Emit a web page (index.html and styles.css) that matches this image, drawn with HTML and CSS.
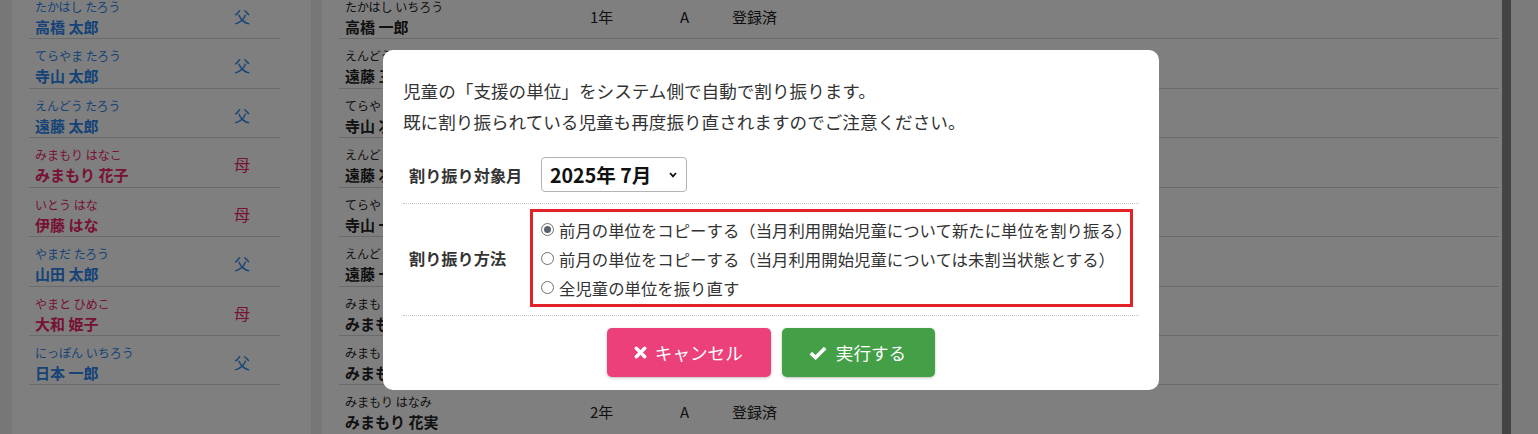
FILE: index.html
```html
<!DOCTYPE html>
<html lang="ja">
<head>
<meta charset="utf-8">
<title>支援の単位 割り振り</title>
<link rel="stylesheet" href="styles.css">
</head>
<body>
<div class="page">
  <aside class="panel-left">
    <ul class="list">
      <li class="row father"><div class="who"><span class="kana">たかはし たろう</span><span class="name">高橋 太郎</span></div><span class="rel">父</span></li>
      <li class="row father"><div class="who"><span class="kana">てらやま たろう</span><span class="name">寺山 太郎</span></div><span class="rel">父</span></li>
      <li class="row father"><div class="who"><span class="kana">えんどう たろう</span><span class="name">遠藤 太郎</span></div><span class="rel">父</span></li>
      <li class="row mother"><div class="who"><span class="kana">みまもり はなこ</span><span class="name">みまもり 花子</span></div><span class="rel">母</span></li>
      <li class="row mother"><div class="who"><span class="kana">いとう はな</span><span class="name">伊藤 はな</span></div><span class="rel">母</span></li>
      <li class="row father"><div class="who"><span class="kana">やまだ たろう</span><span class="name">山田 太郎</span></div><span class="rel">父</span></li>
      <li class="row mother"><div class="who"><span class="kana">やまと ひめこ</span><span class="name">大和 姫子</span></div><span class="rel">母</span></li>
      <li class="row father"><div class="who"><span class="kana">にっぽん いちろう</span><span class="name">日本 一郎</span></div><span class="rel">父</span></li>
    </ul>
  </aside>
  <main class="panel-right">
    <ul class="list">
      <li class="row child"><div class="who"><span class="kana">たかはし いちろう</span><span class="name">高橋 一郎</span></div><span class="grade">1年</span><span class="cls">A</span><span class="status">登録済</span></li>
      <li class="row child"><div class="who"><span class="kana">えんどう さぶろう</span><span class="name">遠藤 三郎</span></div><span class="grade">1年</span><span class="cls">A</span><span class="status">登録済</span></li>
      <li class="row child"><div class="who"><span class="kana">てらやま じろう</span><span class="name">寺山 次郎</span></div><span class="grade">1年</span><span class="cls">A</span><span class="status">登録済</span></li>
      <li class="row child"><div class="who"><span class="kana">えんどう じろう</span><span class="name">遠藤 次郎</span></div><span class="grade">1年</span><span class="cls">A</span><span class="status">登録済</span></li>
      <li class="row child"><div class="who"><span class="kana">てらやま いちろう</span><span class="name">寺山 一郎</span></div><span class="grade">1年</span><span class="cls">A</span><span class="status">登録済</span></li>
      <li class="row child"><div class="who"><span class="kana">えんどう いちろう</span><span class="name">遠藤 一郎</span></div><span class="grade">1年</span><span class="cls">A</span><span class="status">登録済</span></li>
      <li class="row child"><div class="who"><span class="kana">みまもり たろう</span><span class="name">みまもり 太郎</span></div><span class="grade">2年</span><span class="cls">A</span><span class="status">登録済</span></li>
      <li class="row child"><div class="who"><span class="kana">みまもり じろう</span><span class="name">みまもり 次郎</span></div><span class="grade">2年</span><span class="cls">A</span><span class="status">登録済</span></li>
      <li class="row child"><div class="who"><span class="kana">みまもり はなみ</span><span class="name">みまもり 花実</span></div><span class="grade">2年</span><span class="cls">A</span><span class="status">登録済</span></li>
    </ul>
  </main>
  <div class="rail"></div>
  <div class="edge"></div>
</div>

<div class="overlay">
  <div class="modal">
    <p class="desc">児童の「支援の単位」をシステム側で自動で割り振ります。<br>既に割り振られている児童も再度振り直されますのでご注意ください。</p>
    <div class="form">
      <div class="form-row">
        <div class="label">割り振り対象月</div>
        <div class="value">
          <div class="select-box">
            <select class="month">
              <option>2025年 7月</option>
            </select>
            <svg class="chev" width="8" height="6" viewBox="0 0 8 6"><polyline points="1,1 4,4.3 7,1" fill="none" stroke="#111" stroke-width="1.8"/></svg>
          </div>
        </div>
      </div>
      <div class="form-row method">
        <div class="label">割り振り方法</div>
        <div class="value">
          <div class="radios">
            <label class="opt"><input type="radio" name="m" checked><span class="opt-text">前月の単位をコピーする（当月利用開始児童について新たに単位を割り振る）</span></label>
            <label class="opt"><input type="radio" name="m"><span class="opt-text">前月の単位をコピーする（当月利用開始児童については未割当状態とする）</span></label>
            <label class="opt"><input type="radio" name="m"><span class="opt-text">全児童の単位を振り直す</span></label>
          </div>
        </div>
      </div>
    </div>
    <div class="actions">
      <button class="btn cancel" type="button"><svg width="13" height="13" viewBox="0 0 13 13"><path d="M2.3 2.3 L10.7 10.7 M10.7 2.3 L2.3 10.7" stroke="#fff" stroke-width="3.4" stroke-linecap="round"/></svg><span>キャンセル</span></button>
      <button class="btn run" type="button"><svg width="18" height="14" viewBox="0 0 18 14"><polyline points="1.8,7.2 6.6,11.6 16.2,2" fill="none" stroke="#fff" stroke-width="3.6" stroke-linejoin="miter"/></svg><span>実行する</span></button>
    </div>
  </div>
</div>
</body>
</html>
```

FILE: styles.css
```css
* { box-sizing: border-box; }

html, body {
  margin: 0;
  padding: 0;
  height: 100%;
  overflow: hidden;
}

body {
  font-family: "Noto Sans CJK JP", "Noto Sans", sans-serif;
  color: #222;
  background: #eeeeee;
}

.page {
  display: flex;
  height: 100vh;
  padding-left: 12px;
}

.panel-left {
  width: 299px;
  flex: none;
  background: #fff;
  margin-right: 11px;
  padding: 0 31px 0 17px;
}

.panel-right {
  width: 1180px;
  flex: none;
  background: #fff;
  padding: 0 3px 0 17px;
}

.rail {
  width: 9px;
  flex: none;
  background: #888;
}

.edge {
  flex: 1;
  background: #f6f6f6;
}

.list {
  list-style: none;
  margin: -10px 0 0;
  padding: 0;
}

.row {
  display: flex;
  align-items: flex-start;
  height: 49.43px;
  border-bottom: 1px solid #d6d6d6;
  padding-left: 6px;
}

.who {
  display: flex;
  flex-direction: column;
  padding-top: 10px;
}

.kana {
  font-size: 12px;
  line-height: 14px;
  white-space: nowrap;
}

.name {
  font-size: 15px;
  font-weight: bold;
  line-height: 20px;
  margin-top: 3px;
  white-space: nowrap;
}

.panel-left .who { width: 199px; }

.rel {
  font-size: 16px;
  line-height: 20px;
  padding-top: 16px;
}

.father { color: #2a86ee; }
.mother { color: #ee2468; }

.child { color: #222; }
.child .who { width: 245px; }

.grade, .cls, .status {
  font-size: 15px;
  line-height: 20px;
  padding-top: 17px;
}
.grade { width: 90px; }
.cls { width: 52px; }

/* modal */
.overlay {
  position: fixed;
  inset: 0;
  background: rgba(0, 0, 0, 0.5);
  display: flex;
  justify-content: center;
  align-items: flex-start;
  padding: 50px 0 0 4px;
}

.modal {
  width: 776px;
  background: #fff;
  border-radius: 10px;
  padding: 25px 20px 13px;
  color: #333;
}

.desc {
  margin: 0;
  font-size: 17.6px;
  line-height: 31px;
}

.form {
  margin-top: 9px;
}

.form-row {
  display: flex;
  align-items: center;
  padding: 11px 0;
  border-bottom: 1px dotted #c4c4c4;
}

.form-row.method {
  padding: 5px 0 8px;
}

.label {
  width: 127px;
  flex: none;
  padding-left: 6px;
  font-size: 16.2px;
  font-weight: bold;
  line-height: 22px;
}

.value {
  flex: 1;
}

.select-box {
  display: flex;
  align-items: center;
  justify-content: space-between;
  width: 146px;
  height: 35px;
  margin-left: 11px;
  padding: 0 9px 0 8px;
  border: 1px solid #b3b3b3;
  border-radius: 4px;
}

.month {
  appearance: none;
  -webkit-appearance: none;
  border: none;
  background: transparent;
  padding: 0;
  margin: 0;
  font-family: inherit;
  font-size: 19.6px;
  font-weight: bold;
  color: #111;
  outline: none;
}

.chev { flex: none; }

.radios {
  width: 603px;
  border: 3px solid #e32228;
  padding: 3px 8px 2px;
}

.opt {
  display: flex;
  align-items: center;
  height: 29px;
  gap: 5px;
  white-space: nowrap;
}

.opt-text {
  font-size: 16.4px;
  line-height: 22px;
}

.opt input {
  appearance: none;
  -webkit-appearance: none;
  margin: 0;
  width: 13px;
  height: 13px;
  border: 1px solid #707070;
  border-radius: 50%;
  background: #fff;
  flex: none;
  display: grid;
  place-items: center;
}

.opt input:checked::after {
  content: "";
  width: 7px;
  height: 7px;
  border-radius: 50%;
  background: #5a6470;
}

.actions {
  display: flex;
  justify-content: center;
  gap: 11px;
  padding-top: 12px;
}

.btn {
  display: flex;
  align-items: center;
  height: 49px;
  padding: 0 27px;
  border: none;
  border-radius: 5px;
  color: #fff;
  font-family: inherit;
  font-size: 17.6px;
  box-shadow: 0 1px 3px rgba(0, 0, 0, 0.25);
}

.btn.cancel {
  background: #ec407a;
  gap: 8px;
  padding-right: 28px;
}

.btn.run {
  background: #43a047;
  gap: 9px;
  padding-right: 29px;
}
```
